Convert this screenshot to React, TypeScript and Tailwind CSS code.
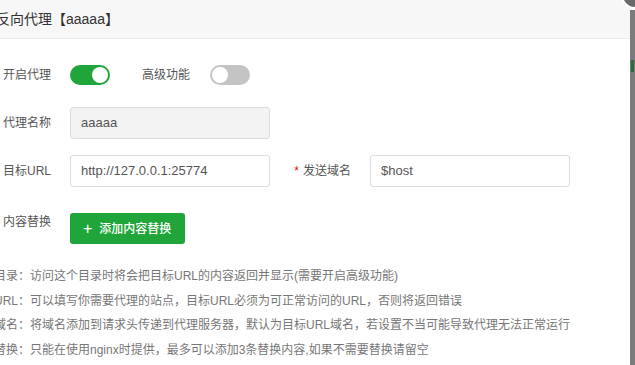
import React from 'react';

const font = { fontFamily: '"Liberation Sans", "Noto Sans CJK SC", sans-serif' };

function Toggle({ on }: { on: boolean }) {
  return (
    <div
      className={`relative w-[40px] h-[20px] shrink-0 rounded-full ${on ? 'bg-[#20a53a]' : 'bg-[#c4c4c4]'}`}
    >
      <div
        className={`absolute top-[2px] w-[16px] h-[16px] rounded-full bg-white ${on ? 'right-[2px]' : 'left-[2px]'}`}
      />
    </div>
  );
}

function Label({ children, required }: { children: React.ReactNode; required?: boolean }) {
  return (
    <div className="w-[100px] shrink-0 pr-[19px] text-right text-[12px] text-[#555]">
      {required && <span className="text-[#ef0808] mr-[4px]">*</span>}
      {children}
    </div>
  );
}

function Input({ value, disabled }: { value: string; disabled?: boolean }) {
  return (
    <div
      className={`w-[200px] h-[32px] shrink-0 flex items-center px-[10px] rounded-[3px] border border-[#dcdce4] text-[13px] text-[#555] ${
        disabled ? 'bg-[#f3f3f3]' : 'bg-white'
      }`}
    >
      {value}
    </div>
  );
}

const tips = [
  '代理目录：访问这个目录时将会把目标URL的内容返回并显示(需要开启高级功能)',
  '目标URL：可以填写你需要代理的站点，目标URL必须为可正常访问的URL，否则将返回错误',
  '发送域名：将域名添加到请求头传递到代理服务器，默认为目标URL域名，若设置不当可能导致代理无法正常运行',
  '内容替换：只能在使用nginx时提供，最多可以添加3条替换内容,如果不需要替换请留空',
];

export default function App() {
  return (
    <div className="relative flex w-[635px] h-[365px] overflow-hidden bg-white" style={font}>
      <div className="flex flex-col w-[630px] shrink-0 bg-white">
        {/* header */}
        <div className="h-[39px] shrink-0 flex items-center bg-[#f7f7f7] border-b border-[#eaeaea]">
          <span className="ml-[-4px] text-[14px] text-[#333]">反向代理【aaaaa】</span>
        </div>

        <div className="ml-[-30px] flex flex-col">
          {/* switches */}
          <div className="flex items-center h-[20px] mt-[26px]">
            <Label>开启代理</Label>
            <Toggle on />
            <div className="w-[100px] shrink-0 pr-[20px] text-right text-[12px] text-[#555]">高级功能</div>
            <Toggle on={false} />
          </div>

          <div className="flex items-center mt-[22px]">
            <Label>代理名称</Label>
            <Input value="aaaaa" disabled />
          </div>

          <div className="flex items-center mt-[16px]">
            <Label>目标URL</Label>
            <Input value="http://127.0.0.1:25774" />
            <Label required>发送域名</Label>
            <Input value="$host" />
          </div>

          <div className="flex items-start mt-[26px]">
            <Label>内容替换</Label>
            <button className="flex items-center w-[115px] h-[31px] rounded-[3px] bg-[#20a53a] text-white text-[12px] pl-[13px]">
              <span className="text-[16px] font-light leading-none mr-[7px]">+</span>
              <span className="font-medium">添加内容替换</span>
            </button>
          </div>

          <ul className="mt-[26px] flex flex-col gap-[12.5px] text-[12px] leading-[12px] text-[#777] whitespace-nowrap">
            {tips.map((t) => (
              <li key={t}>{t}</li>
            ))}
          </ul>
        </div>
      </div>

      {/* overlay strip at the right */}
      <div className="flex-1 bg-[#7b7b7b] mt-[10px] relative">
        <div className="absolute top-[50px] left-[1px] w-[3px] h-[12px] bg-[#2f6b3a]" />
      </div>

      {/* close button */}
      <div className="absolute right-[-14px] top-[-19px] w-[28px] h-[28px] rounded-full bg-[#6a6a6a] border-2 border-white" />
    </div>
  );
}
